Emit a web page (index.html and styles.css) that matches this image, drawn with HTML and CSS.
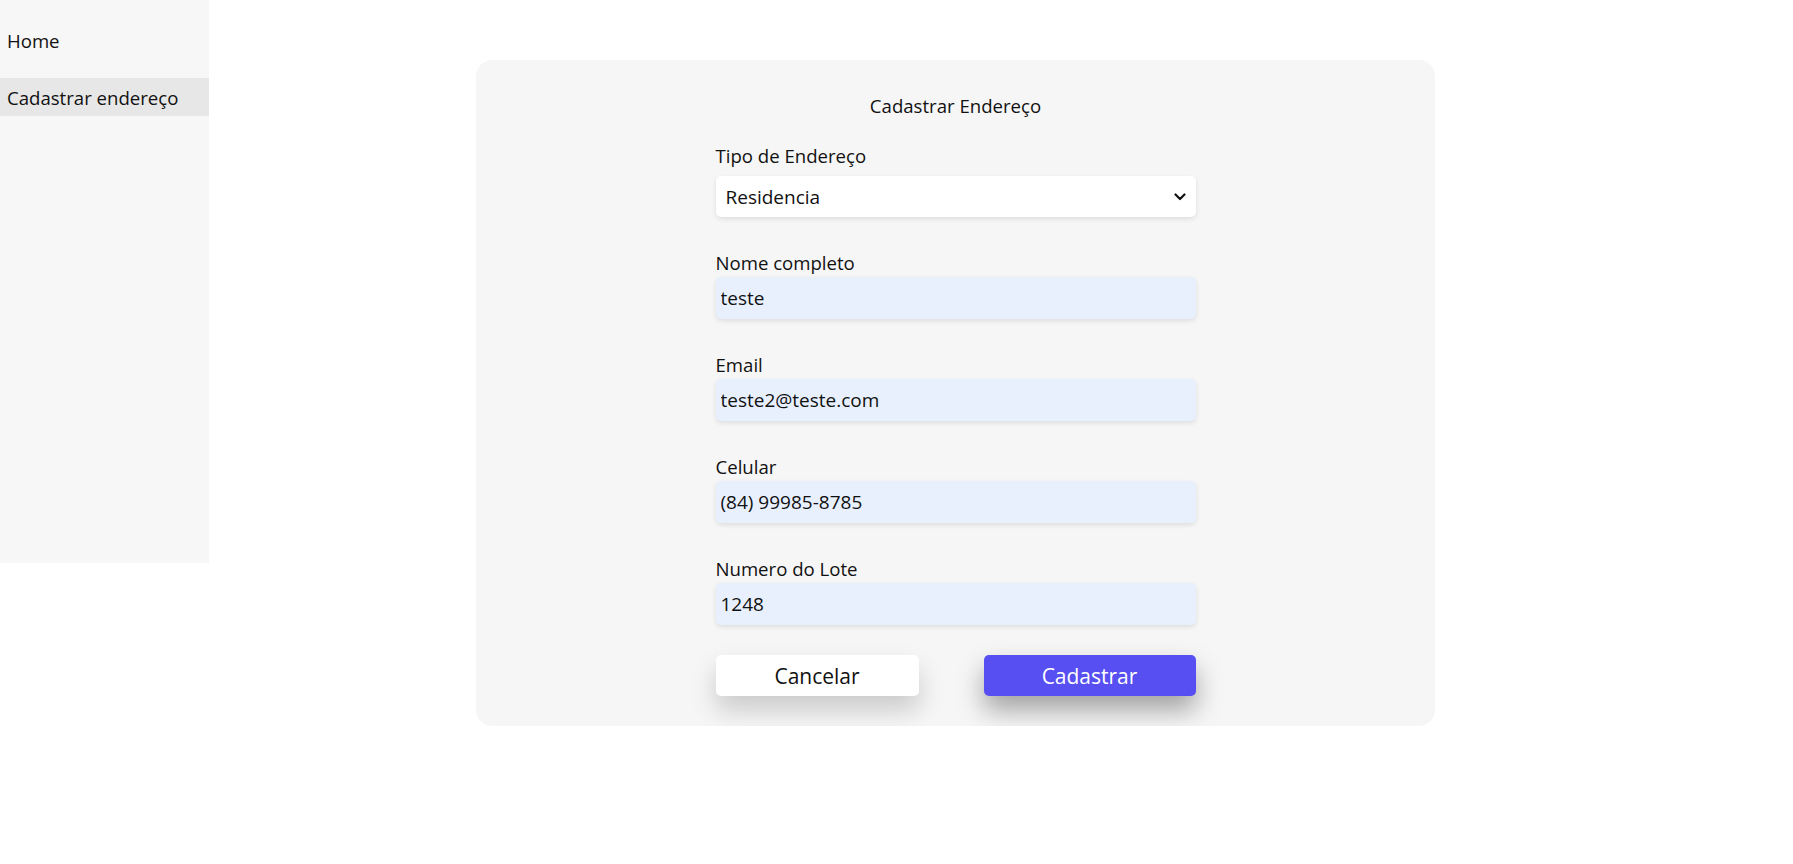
FILE: index.html
```html
<!DOCTYPE html>
<html lang="pt-BR">
<head>
<meta charset="utf-8">
<title>Cadastrar Endereço</title>
<link rel="stylesheet" href="styles.css">
</head>
<body>
<div class="app">
  <nav class="sidebar">
    <a class="nav-item" href="#">Home</a>
    <a class="nav-item active" href="#">Cadastrar endereço</a>
  </nav>
  <main class="main">
    <section class="card">
      <h1 class="card-title">Cadastrar Endereço</h1>
      <form class="form">
        <div class="field field-select">
          <label class="label">Tipo de Endereço</label>
          <div class="select-wrap">
            <select class="select">
              <option>Residencia</option>
            </select>
            <svg class="chevron" width="12" height="8" viewBox="0 0 12 8"><path d="M1.5 1.5 L6 6 L10.5 1.5" fill="none" stroke="#111" stroke-width="2.2" stroke-linecap="round" stroke-linejoin="round"/></svg>
          </div>
        </div>
        <div class="field">
          <label class="label">Nome completo</label>
          <input class="input" type="text" value="teste">
        </div>
        <div class="field">
          <label class="label">Email</label>
          <input class="input" type="text" value="teste2@teste.com">
        </div>
        <div class="field">
          <label class="label">Celular</label>
          <input class="input" type="text" value="(84) 99985-8785">
        </div>
        <div class="field">
          <label class="label">Numero do Lote</label>
          <input class="input" type="text" value="1248">
        </div>
        <div class="actions">
          <button type="button" class="btn btn-cancel">Cancelar</button>
          <button type="button" class="btn btn-primary">Cadastrar</button>
        </div>
      </form>
    </section>
  </main>
</div>
</body>
</html>
```

FILE: styles.css
```css
* { box-sizing: border-box; }
html, body { margin: 0; padding: 0; background: #fff; }
body {
  font-family: "Open Sans", "Noto Sans", sans-serif;
  color: #111;
}
.app { display: flex; align-items: flex-start; }
.sidebar {
  width: 209px;
  height: 563px;
  background: #f7f7f7;
  padding-top: 21px;
  display: flex;
  flex-direction: column;
  gap: 19px;
  flex-shrink: 0;
}
.nav-item {
  display: flex;
  align-items: center;
  height: 38px;
  padding-left: 7px;
  font-size: 18.6px;
  color: #111;
  text-decoration: none;
}
.nav-item.active { background: #e7e7e7; }
.main { flex: 1; padding-top: 60px; padding-left: 267px; }
.card {
  width: 959px;
  height: 666px;
  background: #f6f6f6;
  border-radius: 16px;
  padding-top: 34px;
}
.card-title {
  margin: 0;
  font-size: 18.6px;
  line-height: 24px;
  font-weight: 400;
  text-align: center;
}
.form {
  width: 480px;
  margin: 26px auto 0;
  display: flex;
  flex-direction: column;
}
.field { display: flex; flex-direction: column; margin-bottom: 34px; }
.label {
  font-size: 18.6px;
  line-height: 24px;
  margin-bottom: 2px;
}
.field-select .label { margin-bottom: 8px; }
.select-wrap { position: relative; }
.select {
  width: 100%;
  height: 41px;
  border: none;
  border-radius: 5px;
  background: #fff;
  appearance: none;
  -webkit-appearance: none;
  font-family: inherit;
  font-size: 19px;
  color: #111;
  padding: 0 10px;
  box-shadow: 0 2px 5px rgba(0,0,0,0.1);
}
.chevron { position: absolute; right: 10px; top: 17px; }
.input {
  width: 100%;
  height: 42px;
  border: none;
  border-radius: 5px;
  background: #e8f0fe;
  font-family: inherit;
  font-size: 19px;
  color: #111;
  padding: 0 5px;
  box-shadow: 0 2px 5px rgba(0,0,0,0.1);
}
.actions {
  display: flex;
  justify-content: space-between;
  margin-top: -4px;
}
.btn {
  height: 41px;
  border: none;
  border-radius: 5px;
  font-family: inherit;
  font-size: 21px;
  padding: 0;
}
.btn-cancel {
  width: 203px;
  background: #fff;
  color: #111;
  box-shadow: 0 14px 26px rgba(0,0,0,0.18);
}
.btn-primary {
  width: 212px;
  background: #574ff2;
  color: #fff;
  box-shadow: 0 14px 26px rgba(0,0,0,0.34);
}
```
